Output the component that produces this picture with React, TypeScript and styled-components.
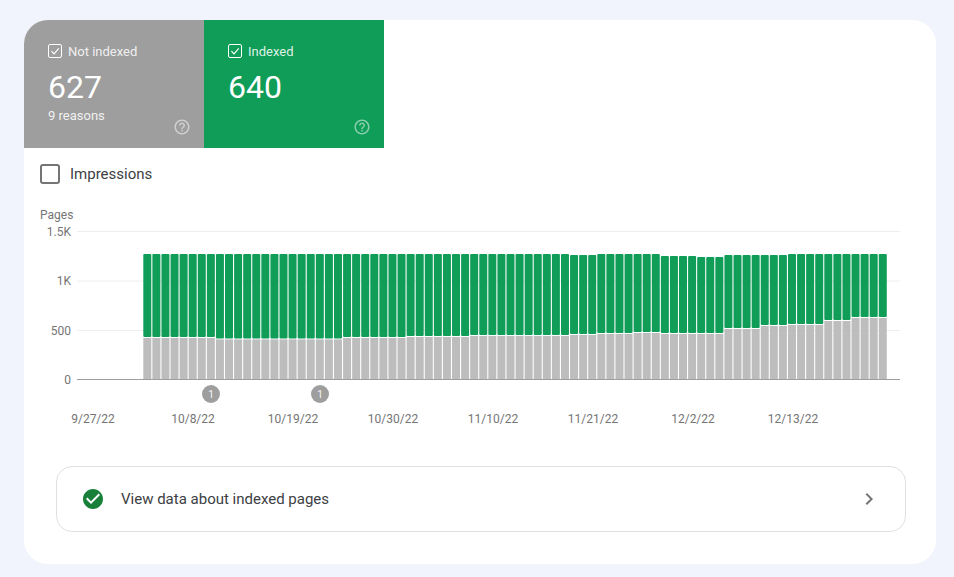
import styled, { createGlobalStyle } from 'styled-components';
import { MdCheckCircle, MdChevronRight, MdHelpOutline } from 'react-icons/md';

const GRID = [
  { label: '1.5K', y: 231.5 },
  { label: '1K', y: 281 },
  { label: '500', y: 330.5 },
];
const DATES = ['9/27/22', '10/8/22', '10/19/22', '10/30/22', '11/10/22', '11/21/22', '12/2/22', '12/13/22'];
const BASE_Y = 379.5;

// [how many bars, y of the value]
const GREY_RUNS = [
  [8, 338], [14, 339.4], [7, 338], [7, 337], [11, 336], [3, 335], [4, 334],
  [3, 333], [7, 334], [4, 329], [3, 326], [4, 325], [3, 321], [4, 318],
];
const TOP_RUNS = [
  [47, 254], [3, 255], [7, 254], [4, 256], [3, 257], [7, 255], [11, 254],
];

const expand = (runs: number[][]) => runs.flatMap(([count, y]) => Array<number>(count).fill(y));
const greyTops = expand(GREY_RUNS);
const bars = expand(TOP_RUNS).map((top, i) => ({ x: 143.3 + i * 9.08, top, grey: greyTops[i] }));

export default function App() {
  return (
    <>
      <GlobalStyle />
      <Page>
        <Card>
          <Tiles>
            <Tile color="#9e9e9e">
              <TileLabel>
                <TileCheck>
                  <svg width="12" height="12" viewBox="0 0 12 12" fill="none">
                    <path d="M2.4 6.2 5 8.8 9.8 3.4" stroke="#fff" strokeWidth="1.2" />
                  </svg>
                </TileCheck>
                Not indexed
              </TileLabel>
              <TileValue>627</TileValue>
              <TileNote>9 reasons</TileNote>
              <HelpIcon size={18} />
            </Tile>
            <Tile color="#0f9d58">
              <TileLabel>
                <TileCheck>
                  <svg width="12" height="12" viewBox="0 0 12 12" fill="none">
                    <path d="M2.4 6.2 5 8.8 9.8 3.4" stroke="#fff" strokeWidth="1.2" />
                  </svg>
                </TileCheck>
                Indexed
              </TileLabel>
              <TileValue>640</TileValue>
              <HelpIcon size={18} />
            </Tile>
          </Tiles>

          <MetricRow>
            <MetricBox />
            Impressions
          </MetricRow>

          <ChartTitle>Pages</ChartTitle>
          <svg width="912" height="210" viewBox="24 222 912 210" style={{ display: 'block' }}>
            {GRID.map(({ label, y }) => (
              <g key={label}>
                <line x1="77" x2="900" y1={y} y2={y} stroke="#eeeeee" />
                <AxisText x="71" y={y + 4} textAnchor="end">
                  {label}
                </AxisText>
              </g>
            ))}
            <AxisText x="71" y={BASE_Y + 4} textAnchor="end">
              0
            </AxisText>
            {bars.map(({ x, top, grey }) => (
              <g key={x}>
                <rect x={x} y={top} width="8" height={grey - 1 - top} rx="1" fill="#0f9d58" />
                <rect x={x} y={grey} width="8" height={BASE_Y - grey} fill="#bdbdbd" />
              </g>
            ))}
            <line x1="77" x2="900" y1={BASE_Y} y2={BASE_Y} stroke="#9e9e9e" />
            {[211, 320].map((cx) => (
              <g key={cx}>
                <circle cx={cx} cy="394" r="9" fill="#9e9e9e" />
                <BadgeText x={cx} y="398" textAnchor="middle">
                  1
                </BadgeText>
              </g>
            ))}
            {DATES.map((date, i) => (
              <AxisText key={date} x={93 + i * 100} y="423" textAnchor="middle">
                {date}
              </AxisText>
            ))}
          </svg>

          <LinkRow>
            <MdCheckCircle size={24} color="#188038" />
            <LinkText>View data about indexed pages</LinkText>
            <MdChevronRight size={24} color="#757575" />
          </LinkRow>
        </Card>
      </Page>
    </>
  );
}

const GlobalStyle = createGlobalStyle`
  html, body {
    margin: 0;
    background: #f1f4fd;
    font-family: Roboto, "Liberation Sans", sans-serif;
  }
`;

const Page = styled.div`
  padding: 20px 18px 13px 24px;
`;

const Card = styled.section`
  width: 912px;
  height: 544px;
  background: #ffffff;
  border-radius: 24px;
  overflow: hidden;
`;

const Tiles = styled.div`
  display: flex;
`;

const Tile = styled.div<{ color: string }>`
  position: relative;
  width: 180px;
  height: 128px;
  padding: 24px;
  box-sizing: border-box;
  background: ${(p) => p.color};
  color: #ffffff;
`;

const TileLabel = styled.div`
  display: flex;
  align-items: center;
  gap: 6px;
  height: 14px;
  font-size: 13px;
  color: rgba(255, 255, 255, 0.87);
`;

const TileCheck = styled.span`
  display: flex;
  align-items: center;
  justify-content: center;
  width: 14px;
  height: 14px;
  box-sizing: border-box;
  border: 1px solid #ffffff;
  border-radius: 2px;
`;

const TileValue = styled.div`
  margin-top: 9px;
  font-size: 32px;
  line-height: 40px;
`;

const TileNote = styled.div`
  margin-top: 1px;
  font-size: 13px;
  line-height: 16px;
  color: rgba(255, 255, 255, 0.87);
`;

const HelpIcon = styled(MdHelpOutline)`
  position: absolute;
  right: 13px;
  bottom: 12px;
  color: rgba(255, 255, 255, 0.5);
`;

const MetricRow = styled.label`
  display: flex;
  align-items: center;
  gap: 10px;
  height: 20px;
  margin: 16px 0 0 16px;
  font-size: 15px;
  color: #3c4043;
`;

const MetricBox = styled.span`
  width: 20px;
  height: 20px;
  box-sizing: border-box;
  border: 2px solid #757575;
  border-radius: 3px;
`;

const ChartTitle = styled.div`
  margin: 24px 0 0 16px;
  font-size: 12px;
  line-height: 14px;
  color: #757575;
`;

const AxisText = styled.text`
  font-size: 12px;
  fill: #757575;
`;

const BadgeText = styled.text`
  font-size: 11px;
  fill: rgba(255, 255, 255, 0.87);
`;

const LinkRow = styled.div`
  display: flex;
  align-items: center;
  gap: 16px;
  height: 66px;
  margin: 34px 30px 0 32px;
  padding: 0 24px 0 24px;
  box-sizing: border-box;
  border: 1px solid #e0e0e0;
  border-radius: 16px;
`;

const LinkText = styled.span`
  flex: 1;
  font-size: 15px;
  color: #3c4043;
`;
